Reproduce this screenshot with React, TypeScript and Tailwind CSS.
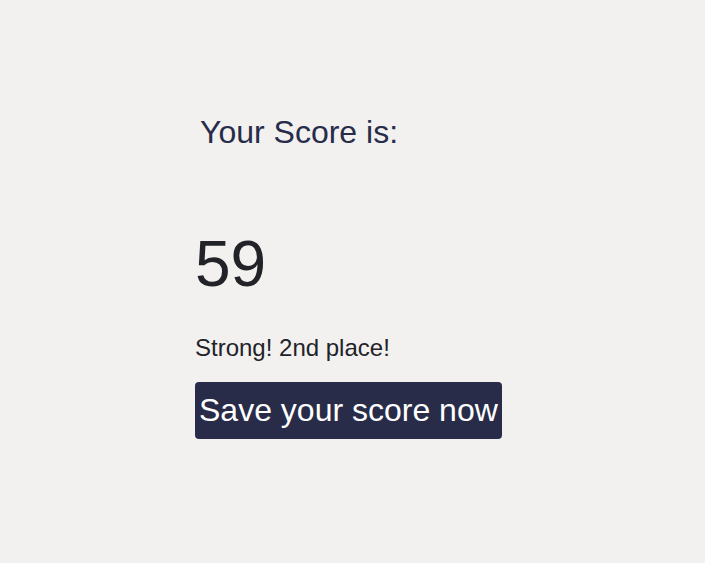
export default function App() {
  return (
    <div className="min-h-[563px] w-full bg-[#f2f1ef] font-['Liberation_Sans',Arial,sans-serif]">
      <div className="flex flex-col items-start pl-[195px] pt-[116px]">
        <h1 className="pl-[5px] text-[32px] leading-[32px] text-[#272c4a]">Your Score is:</h1>
        <div className="mt-[84px] text-[64px] leading-[64px] text-[#222328]">59</div>
        <p className="mt-[40px] text-[24px] leading-[24px] text-[#222328]">Strong! 2nd place!</p>
        <button className="mt-[22px] rounded bg-[#282c49] px-1 pt-[10px] pb-[10px] text-[32px] leading-[37px] text-white">
          Save your score now
        </button>
      </div>
    </div>
  );
}
